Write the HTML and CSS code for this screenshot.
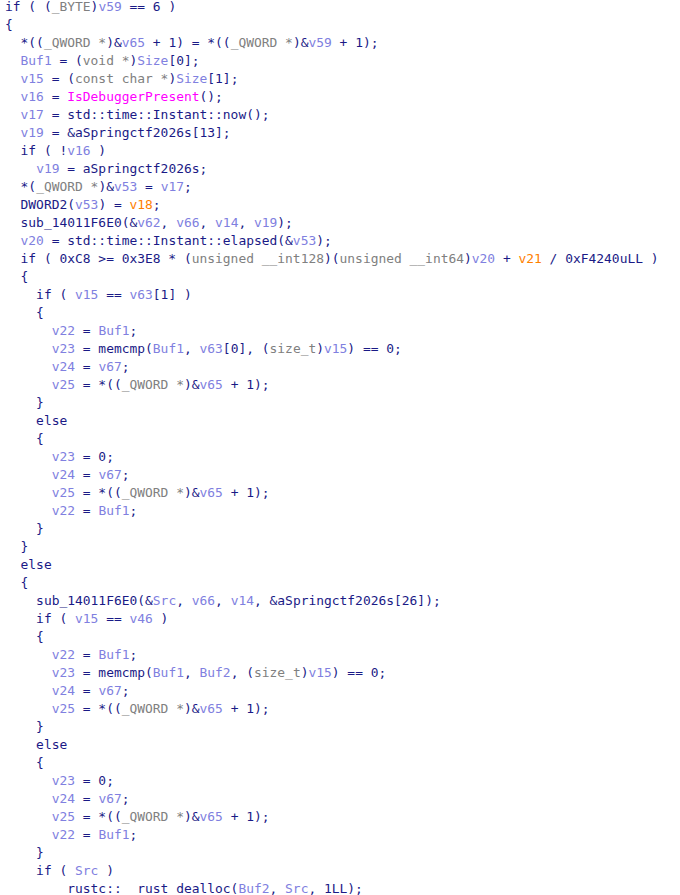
FILE: index.html
```html
<!DOCTYPE html>
<html>
<head>
<meta charset="utf-8">
<link rel="stylesheet" href="styles.css">
</head>
<body>
<div class="code">
<div class="l">if ( (<span class="t">_BYTE</span>)<span class="v">v59</span> == 6 )</div>
<div class="l">{</div>
<div class="l">  *((<span class="t">_QWORD *</span>)&amp;<span class="v">v65</span> + 1) = *((<span class="t">_QWORD *</span>)&amp;<span class="v">v59</span> + 1);</div>
<div class="l">  <span class="v">Buf1</span> = (<span class="t">void *</span>)<span class="v">Size</span>[0];</div>
<div class="l">  <span class="v">v15</span> = (<span class="t">const char *</span>)<span class="v">Size</span>[1];</div>
<div class="l">  <span class="v">v16</span> = <span class="f">IsDebuggerPresent</span>();</div>
<div class="l">  <span class="v">v17</span> = std::time::Instant::now();</div>
<div class="l">  <span class="v">v19</span> = &amp;aSpringctf2026s[13];</div>
<div class="l">  if ( !<span class="v">v16</span> )</div>
<div class="l">    <span class="v">v19</span> = aSpringctf2026s;</div>
<div class="l">  *(<span class="t">_QWORD *</span>)&amp;<span class="v">v53</span> = <span class="v">v17</span>;</div>
<div class="l">  DWORD2(<span class="v">v53</span>) = <span class="o">v18</span>;</div>
<div class="l">  sub_14011F6E0(&amp;<span class="v">v62</span>, <span class="v">v66</span>, <span class="v">v14</span>, <span class="v">v19</span>);</div>
<div class="l">  <span class="v">v20</span> = std::time::Instant::elapsed(&amp;<span class="v">v53</span>);</div>
<div class="l">  if ( 0xC8 &gt;= 0x3E8 * (<span class="t">unsigned __int128</span>)(<span class="t">unsigned __int64</span>)<span class="v">v20</span> + <span class="o">v21</span> / 0xF4240uLL )</div>
<div class="l">  {</div>
<div class="l">    if ( <span class="v">v15</span> == <span class="v">v63</span>[1] )</div>
<div class="l">    {</div>
<div class="l">      <span class="v">v22</span> = <span class="v">Buf1</span>;</div>
<div class="l">      <span class="v">v23</span> = memcmp(<span class="v">Buf1</span>, <span class="v">v63</span>[0], (<span class="t">size_t</span>)<span class="v">v15</span>) == 0;</div>
<div class="l">      <span class="v">v24</span> = <span class="v">v67</span>;</div>
<div class="l">      <span class="v">v25</span> = *((<span class="t">_QWORD *</span>)&amp;<span class="v">v65</span> + 1);</div>
<div class="l">    }</div>
<div class="l">    else</div>
<div class="l">    {</div>
<div class="l">      <span class="v">v23</span> = 0;</div>
<div class="l">      <span class="v">v24</span> = <span class="v">v67</span>;</div>
<div class="l">      <span class="v">v25</span> = *((<span class="t">_QWORD *</span>)&amp;<span class="v">v65</span> + 1);</div>
<div class="l">      <span class="v">v22</span> = <span class="v">Buf1</span>;</div>
<div class="l">    }</div>
<div class="l">  }</div>
<div class="l">  else</div>
<div class="l">  {</div>
<div class="l">    sub_14011F6E0(&amp;<span class="v">Src</span>, <span class="v">v66</span>, <span class="v">v14</span>, &amp;aSpringctf2026s[26]);</div>
<div class="l">    if ( <span class="v">v15</span> == <span class="v">v46</span> )</div>
<div class="l">    {</div>
<div class="l">      <span class="v">v22</span> = <span class="v">Buf1</span>;</div>
<div class="l">      <span class="v">v23</span> = memcmp(<span class="v">Buf1</span>, <span class="v">Buf2</span>, (<span class="t">size_t</span>)<span class="v">v15</span>) == 0;</div>
<div class="l">      <span class="v">v24</span> = <span class="v">v67</span>;</div>
<div class="l">      <span class="v">v25</span> = *((<span class="t">_QWORD *</span>)&amp;<span class="v">v65</span> + 1);</div>
<div class="l">    }</div>
<div class="l">    else</div>
<div class="l">    {</div>
<div class="l">      <span class="v">v23</span> = 0;</div>
<div class="l">      <span class="v">v24</span> = <span class="v">v67</span>;</div>
<div class="l">      <span class="v">v25</span> = *((<span class="t">_QWORD *</span>)&amp;<span class="v">v65</span> + 1);</div>
<div class="l">      <span class="v">v22</span> = <span class="v">Buf1</span>;</div>
<div class="l">    }</div>
<div class="l">    if ( <span class="v">Src</span> )</div>
<div class="l">      __rustc::__rust_dealloc(<span class="v">Buf2</span>, <span class="v">Src</span>, 1LL);</div>
</div>
</body>
</html>
```
FILE: styles.css
```css
html, body {
  margin: 0;
  padding: 0;
  background: #ffffff;
  overflow: hidden;
}
.code {
  display: flex;
  flex-direction: column;
  margin: -2px 0 0 0;
  padding: 0 0 0 5px;
  font-family: "DejaVu Sans Mono", "Liberation Mono", monospace;
  font-size: 12.93px;
  line-height: 18px;
  color: #1a1a86;
}
.l {
  white-space: pre;
  height: 18px;
}
.v { color: #8080e0; }
.t { color: #808080; }
.f { color: #ff00ff; }
.o { color: #ff8000; }
```
